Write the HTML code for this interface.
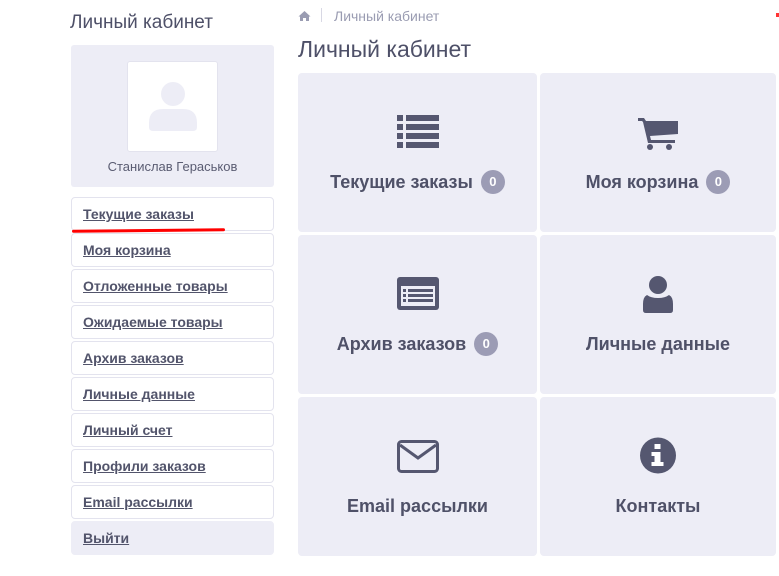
<!DOCTYPE html>
<html><head><meta charset="utf-8"><style>
*{margin:0;padding:0;box-sizing:border-box}
body{width:779px;height:576px;background:#fff;font-family:"Liberation Sans","DejaVu Sans",sans-serif;color:#555770;position:relative;overflow:hidden}
.a{position:absolute}
h2{position:absolute;left:70px;top:12px;font-size:19px;font-weight:normal;color:#4e5068}
.panel{left:71px;top:45px;width:203px;height:142px;background:#ededf6;border-radius:3px}
.av{left:127px;top:61px;width:91px;height:91px;background:#fff;border-radius:3px;border:1px solid #e3e3ee}
.name{left:71px;top:159px;width:203px;text-align:center;font-size:13px;color:#5a5c72}
.mi{position:absolute;left:71px;width:203px;height:34px;border:1px solid #e3e3ee;border-radius:4px;background:#fff;padding-left:11px;line-height:32px;font-size:14px;font-weight:bold;color:#52546b;text-decoration:underline}
.mi.g{background:#ededf6;border-color:#ededf6}
.t{position:absolute;background:#ededf6;border-radius:4px}
.lbl{position:absolute;left:0;right:0;text-align:center;font-size:18px;font-weight:bold;color:#4f5168;top:97px;height:24px;line-height:24px}
.b{display:inline-block;width:24px;height:24px;border-radius:12px;background:#9c9cb5;color:#fff;font-size:13px;line-height:24px;vertical-align:top;margin-left:3px}
.ic{position:absolute;left:50%;top:40px;transform:translateX(-50%)}
</style></head><body>
<h2>Личный кабинет</h2>
<div class="a panel"></div>
<div class="a av"><svg width="89" height="89"><circle cx="45" cy="32" r="12" fill="#ededf6"/><path d="M21 61 q0-14 14-14 h20 q14 0 14 14 v4 q0 4-4 4 h-40 q-4 0-4-4z" fill="#ededf6"/></svg></div>
<div class="a name">Станислав Гераськов</div>
<div class="mi" style="top:197px">Текущие заказы</div>
<div class="a" style="left:72px;top:229px;width:153px;height:3px;background:#f00;border-radius:2px;transform:rotate(-0.6deg)"></div>
<div class="mi" style="top:233px">Моя корзина</div>
<div class="mi" style="top:269px">Отложенные товары</div>
<div class="mi" style="top:305px">Ожидаемые товары</div>
<div class="mi" style="top:341px">Архив заказов</div>
<div class="mi" style="top:377px">Личные данные</div>
<div class="mi" style="top:413px">Личный счет</div>
<div class="mi" style="top:449px">Профили заказов</div>
<div class="mi" style="top:485px">Email рассылки</div>
<div class="mi g" style="top:521px">Выйти</div>

<svg class="a" style="left:298px;top:10px" width="13" height="12" viewBox="0 0 13 12"><path d="M6.5 1 L0.5 6.5 L2 6.5 L2 11 L5 11 L5 8 L8 8 L8 11 L11 11 L11 6.5 L12.5 6.5z" fill="#9a9cb2"/></svg>
<div class="a" style="left:321px;top:8px;width:1px;height:14px;background:#d8d8e4"></div>
<div class="a" style="left:334px;top:8px;font-size:14px;color:#9a9cb2">Личный кабинет</div>
<div class="a" style="left:298px;top:36px;font-size:23px;color:#4e5068">Личный кабинет</div>
<div class="a" style="left:776px;top:13px;width:3px;height:4px;background:#f33"></div>

<div class="t" style="left:298px;top:73px;width:239px;height:159px">
<svg class="ic" style="top:42px" width="42" height="34"><g fill="#555770"><rect x="0" y="0" width="6" height="6"/><rect x="9" y="0" width="33" height="6"/><rect x="0" y="9" width="6" height="6"/><rect x="9" y="9" width="33" height="6"/><rect x="0" y="18" width="6" height="6"/><rect x="9" y="18" width="33" height="6"/><rect x="0" y="27" width="6" height="6"/><rect x="9" y="27" width="33" height="6"/></g></svg>
<div class="lbl">Текущие заказы <span class="b">0</span></div></div>
<div class="t" style="left:540px;top:73px;width:236px;height:159px">
<svg class="ic" style="top:43px" width="40" height="36"><g fill="#555770"><path d="M0 2 h6 l2 3 h32 v13 l-28 2 l1 4 h24 v3 h-27 l-5-21 l-1-1 h-4z"/><circle cx="12" cy="31" r="3"/><circle cx="31" cy="31" r="3"/></g></svg>
<div class="lbl">Моя корзина <span class="b">0</span></div></div>
<div class="a" style="left:779px;top:73px;width:2px;height:483px;background:#ededf6"></div>

<div class="t" style="left:298px;top:235px;width:239px;height:159px">
<svg class="ic" style="top:42px" width="42" height="33"><rect x="0" y="0" width="42" height="33" rx="3" fill="#555770"/><rect x="4" y="9" width="34" height="20" fill="#ededf6"/><g fill="#555770"><rect x="6" y="12" width="3" height="3"/><rect x="11" y="12" width="25" height="3"/><rect x="6" y="17" width="3" height="3"/><rect x="11" y="17" width="25" height="3"/><rect x="6" y="22" width="3" height="3"/><rect x="11" y="22" width="25" height="3"/></g></svg>
<div class="lbl">Архив заказов <span class="b">0</span></div></div>
<div class="t" style="left:540px;top:235px;width:236px;height:159px">
<svg class="ic" style="top:41px" width="32" height="37"><g fill="#555770"><circle cx="16" cy="9" r="9"/><path d="M5 19 q4 3 11 3 q7 0 11-3 q4 2 4 9 v6 q0 3-3 3 h-24 q-3 0-3-3 v-6 q0-7 4-9z"/></g></svg>
<div class="lbl">Личные данные</div></div>

<div class="t" style="left:298px;top:397px;width:239px;height:159px">
<svg class="ic" style="top:43px" width="42" height="33"><rect x="1.5" y="1.5" width="39" height="30" rx="3" fill="none" stroke="#555770" stroke-width="3"/><path d="M3 5 L21 18 L39 5" fill="none" stroke="#555770" stroke-width="3"/></svg>
<div class="lbl">Email рассылки</div></div>
<div class="t" style="left:540px;top:397px;width:236px;height:159px">
<svg class="ic" style="top:40px" width="37" height="37"><circle cx="18.5" cy="18.5" r="18" fill="#555770"/><g fill="#fff"><rect x="15" y="7" width="6" height="5"/><path d="M12 15 h9 v10 h3 v4 h-12 v-4 h3 v-6 h-3z"/></g></svg>
<div class="lbl">Контакты</div></div>
</body></html>
